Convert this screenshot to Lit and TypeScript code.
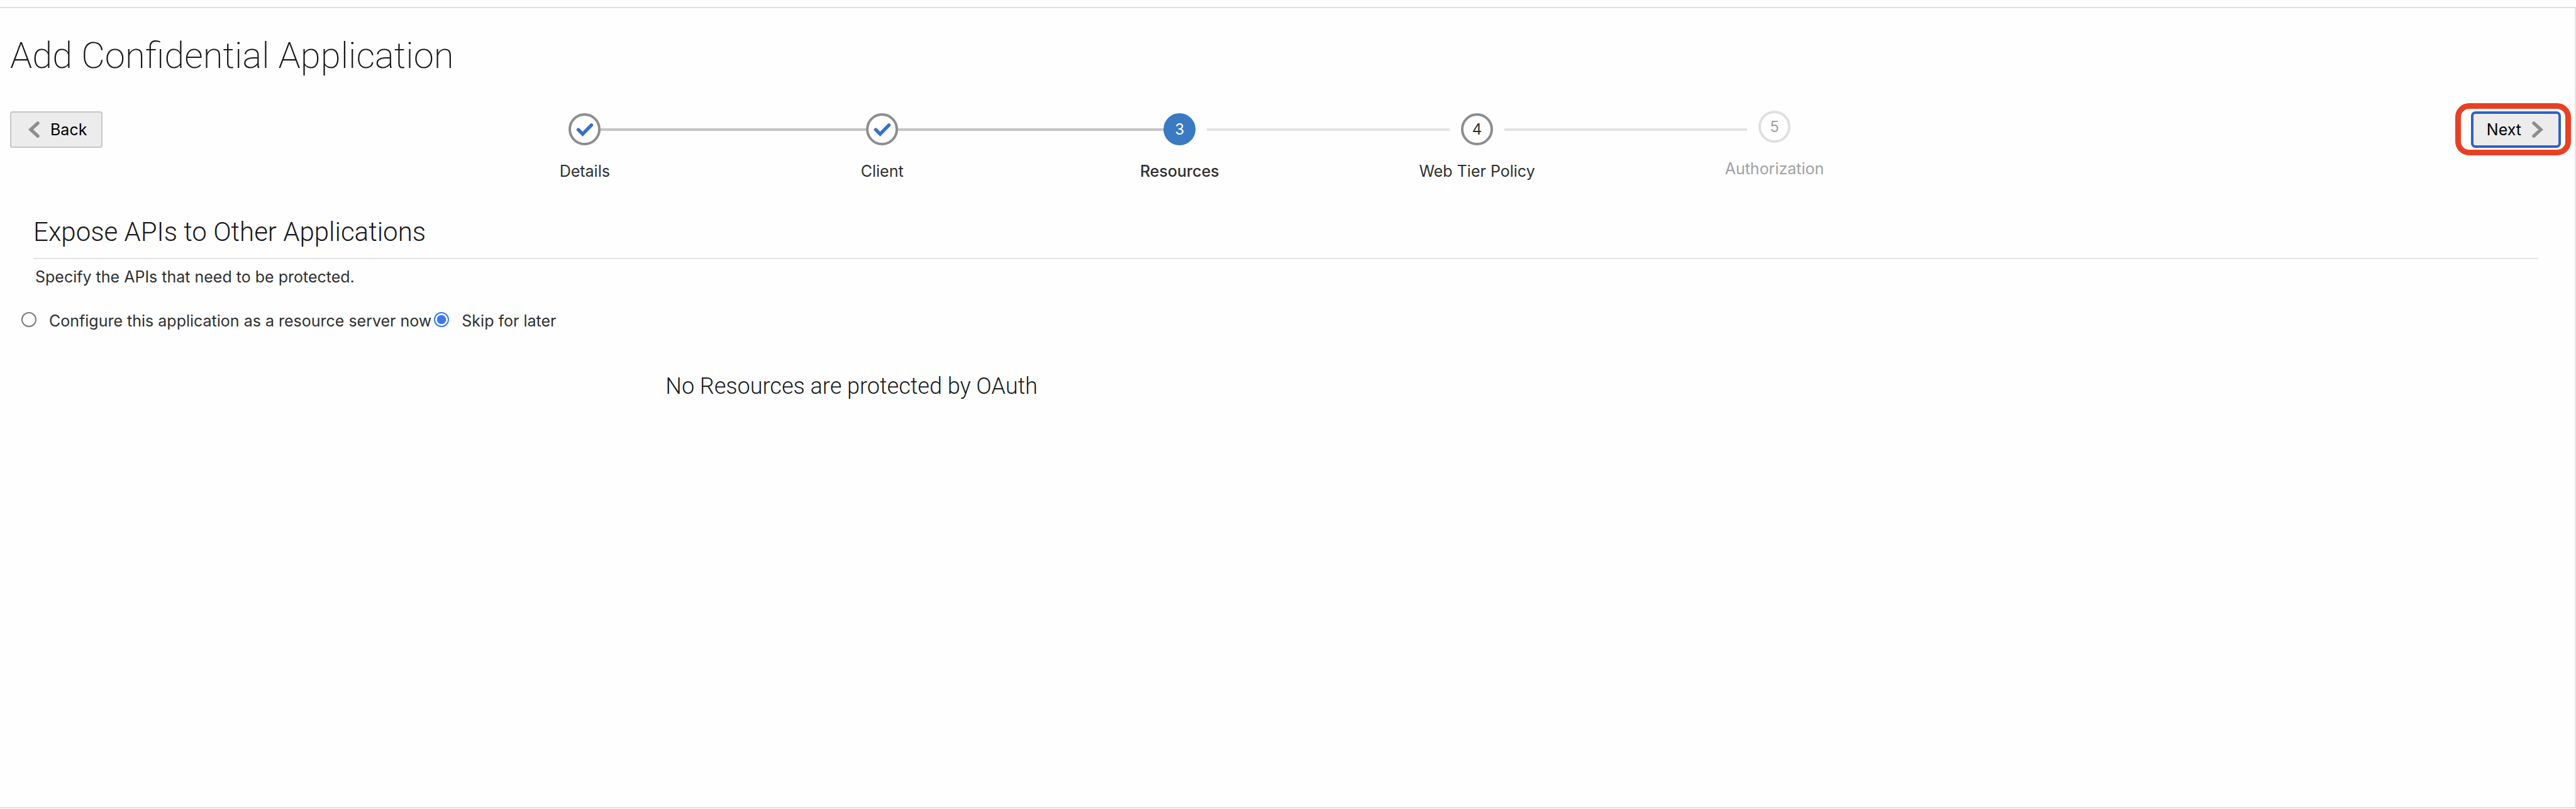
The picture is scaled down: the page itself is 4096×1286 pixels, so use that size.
import { LitElement, html, css, nothing } from "lit";
import { customElement, property, state } from "lit/decorators.js";
import { classMap } from "lit/directives/class-map.js";

type StepState = "done" | "current" | "next" | "disabled";

interface Step {
  label: string;
  state: StepState;
}

@customElement("train-steps")
class TrainSteps extends LitElement {
  @property({ attribute: false }) steps: Step[] = [];

  static styles = css`
    :host {
      display: block;
    }
    .steps {
      display: grid;
      grid-auto-flow: column;
      grid-auto-columns: 1fr;
      margin: 0;
      padding: 0;
      list-style: none;
    }
    .step {
      color: #2f3031;
    }
    .link {
      display: block;
      color: inherit;
      text-decoration: none;
    }
    .track {
      display: grid;
      grid-template-columns: minmax(0, 1fr) auto minmax(0, 1fr);
      align-items: center;
      height: 51px;
    }
    .line {
      height: 4px;
      background: #e2e4e3;
    }
    .line.passed {
      background: #c3c4c6;
    }
    .line.before-gap {
      margin-right: 18px;
    }
    .line.after-gap {
      margin-left: 18px;
    }
    .line.hidden {
      background: none;
    }
    .marker {
      display: grid;
      place-items: center;
      box-sizing: border-box;
      width: 51px;
      height: 51px;
      border: 4px solid #8b8d8f;
      border-radius: 50%;
      background: #fff;
      font-size: 24px;
      line-height: 30px;
    }
    .check {
      display: block;
      width: 43px;
      height: 43px;
    }
    .label {
      display: block;
      margin-top: 26px;
      font-size: 25px;
      line-height: 30px;
      text-align: center;
    }
    .current .marker {
      border-color: #3a7ac2;
      background: #3a7ac2;
      color: #fff;
    }
    .current .label {
      font-weight: 500;
    }
    .disabled {
      color: #a0a1a2;
    }
    .disabled .track {
      height: 47px;
    }
    .disabled .marker {
      margin-top: -4px;
      border-color: #dfe1e0;
    }
    .disabled .line {
      margin-top: 4px;
    }
  `;

  private line(side: "before" | "after", index: number) {
    const other = this.steps[side === "before" ? index - 1 : index + 1];
    const from = side === "before" ? other : this.steps[index];
    const passed = from?.state === "done";
    return html`<span
      class=${classMap({
        line: true,
        hidden: !other,
        passed: !!other && passed,
        "before-gap": side === "before" && !passed,
        "after-gap": side === "after" && !passed,
      })}
    ></span>`;
  }

  render() {
    return html`<ol class="steps">
      ${this.steps.map((step, i) => {
        const body = html`
          <span class="track">
            ${this.line("before", i)}
            <span class="marker">
              ${step.state === "done"
                ? html`<svg class="check" viewBox="13 13 142 142" aria-hidden="true">
                    <path
                      d="M51 86 L74 109 L120 62"
                      fill="none"
                      stroke="#3770c8"
                      stroke-width="18"
                      stroke-linecap="round"
                      stroke-linejoin="miter"
                    />
                  </svg>`
                : i + 1}
            </span>
            ${this.line("after", i)}
          </span>
          <span class="label">${step.label}</span>
        `;
        return html`<li
          class="step ${step.state}"
          aria-current=${step.state === "current" ? "step" : nothing}
        >
          ${step.state === "disabled"
            ? html`<span class="link" aria-disabled="true">${body}</span>`
            : html`<a class="link" href="#">${body}</a>`}
        </li>`;
      })}
    </ol>`;
  }
}

@customElement("app-root")
class AppRoot extends LitElement {
  @state() private mode: "configure" | "skip" = "skip";

  private steps: Step[] = [
    { label: "Details", state: "done" },
    { label: "Client", state: "done" },
    { label: "Resources", state: "current" },
    { label: "Web Tier Policy", state: "next" },
    { label: "Authorization", state: "disabled" },
  ];

  static styles = css`
    :host {
      display: flex;
      flex-direction: column;
      min-height: 100vh;
      background: #fff;
      color: #2f3031;
      font-family: Inter, "Liberation Sans", sans-serif;
      font-size: 25px;
      line-height: 30px;
    }
    .panel {
      flex: 1;
      box-sizing: border-box;
      margin: 11px 0 1px;
      padding-top: 39px;
      border: 2px solid #dfdfdf;
      border-right-color: #e4e4e4;
      border-left: 0;
      background: #fefefe;
    }
    .title,
    .subtitle,
    .empty {
      margin: 0;
      color: #18191a;
      font-family: Roboto, "Liberation Sans", sans-serif;
      font-weight: 300;
    }
    .title {
      padding: 0 16px;
      font-size: 58px;
      font-weight: 200;
      line-height: 72px;
    }
    .bar {
      display: grid;
      grid-template-columns: auto 530fr 2365fr 871fr auto;
      align-items: start;
      margin-top: 53px;
      padding: 0 22px 0 16px;
    }
    .steps {
      grid-column: 3;
      padding-top: 3px;
    }
    .next-slot {
      grid-column: 5;
      position: relative;
    }
    .highlight {
      position: absolute;
      inset: -13px -16px -12px -25px;
      border: 9px solid #e84025;
      border-radius: 22px;
      pointer-events: none;
    }
    .btn {
      display: flex;
      align-items: center;
      box-sizing: border-box;
      height: 58px;
      margin: 0;
      border: 2px solid #c6c6c6;
      border-radius: 4px;
      background: #ececec;
      color: #000;
      font: inherit;
    }
    .back {
      gap: 17px;
      padding: 0 23px 0 27px;
    }
    .next {
      gap: 17px;
      padding: 0 24px 0 21px;
      border: 4px solid #2b62c8;
      border-radius: 7px;
    }
    .chevron {
      display: block;
      width: 18px;
      height: 26px;
      fill: none;
      stroke: #8b8d8f;
      stroke-width: 17;
    }
    .content {
      margin: 57px 58px 0 53px;
    }
    .subtitle {
      padding-bottom: 16px;
      border-bottom: 2px solid #e4e4e4;
      font-size: 42px;
      line-height: 50px;
    }
    .hint {
      margin: 13px 3px 0;
    }
    .choices {
      display: flex;
      gap: 4px;
      margin: 40px 0 0;
      padding: 0 34px;
      border: 0;
    }
    .choice {
      display: flex;
      align-items: flex-start;
      gap: 20px;
    }
    .radio {
      appearance: none;
      flex: none;
      box-sizing: border-box;
      width: 24px;
      height: 24px;
      margin: 1px 0 0;
      padding: 3px;
      border: 2px solid #7b7b7b;
      border-radius: 50%;
      background: #fff;
    }
    .radio:checked {
      border-color: #3b78f6;
      background: radial-gradient(circle closest-side, #3b78f6 69%, #fff 75%);
    }
    .empty {
      width: 66.15%;
      margin-top: 67px;
      font-size: 36px;
      line-height: 44px;
      text-align: center;
    }
  `;

  render() {
    return html`
      <main class="panel">
        <h1 class="title">Add Confidential Application</h1>
        <div class="bar">
          <button class="btn back" type="button">
            <svg class="chevron" viewBox="0 0 58 85" aria-hidden="true">
              <path d="M49 9 L12 42.5 L49 76" stroke-linecap="round" />
            </svg>
            Back
          </button>
          <train-steps class="steps" .steps=${this.steps}></train-steps>
          <div class="next-slot">
            <button class="btn next" type="button">
              Next
              <svg class="chevron" viewBox="0 0 58 85" aria-hidden="true">
                <path d="M9 9 L46 42.5 L9 76" stroke-linecap="round" />
              </svg>
            </button>
            <span class="highlight"></span>
          </div>
        </div>
        <section class="content">
          <h2 class="subtitle">Expose APIs to Other Applications</h2>
          <p class="hint">Specify the APIs that need to be protected.</p>
        </section>
        <fieldset class="choices" aria-label="Resource server configuration">
          <label class="choice">
            <input
              class="radio"
              type="radio"
              name="mode"
              .checked=${this.mode === "configure"}
              @change=${() => (this.mode = "configure")}
            />
            Configure this application as a resource server now
          </label>
          <label class="choice">
            <input
              class="radio"
              type="radio"
              name="mode"
              .checked=${this.mode === "skip"}
              @change=${() => (this.mode = "skip")}
            />
            Skip for later
          </label>
        </fieldset>
        <p class="empty">No Resources are protected by OAuth</p>
      </main>
    `;
  }
}
